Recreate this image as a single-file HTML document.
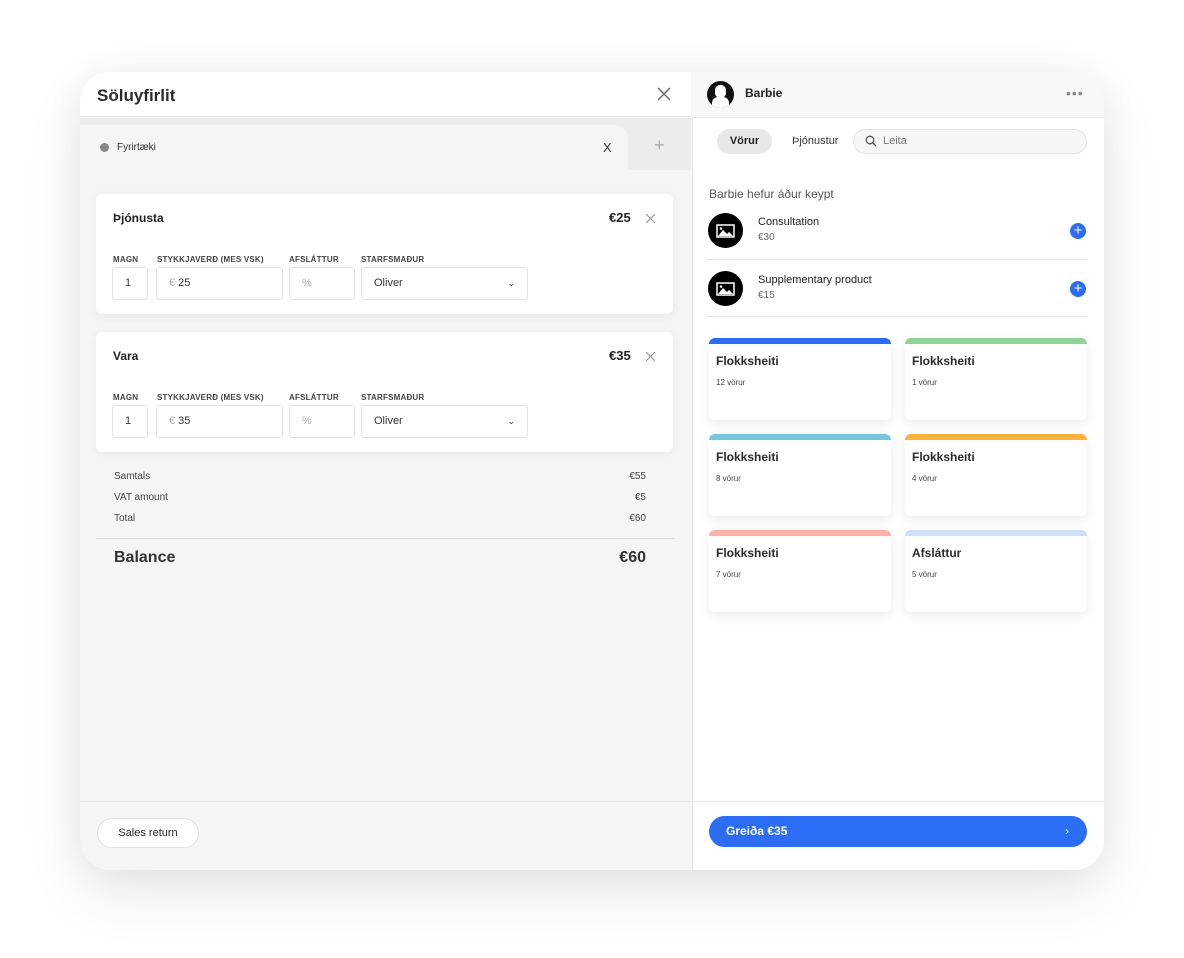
<!DOCTYPE html>
<html><head><meta charset="utf-8"><style>
*{box-sizing:border-box;margin:0;padding:0}
body{width:1184px;height:958px;background:#fff;font-family:"Liberation Sans",sans-serif;color:#222;position:relative;overflow:hidden}
.abs{position:absolute}
.app{position:absolute;left:80px;top:72px;width:1024px;height:798px;border-radius:30px;overflow:hidden;box-shadow:0 24px 60px rgba(0,0,0,.09),0 0 40px rgba(0,0,0,.05);background:#f5f5f5}
.card{position:absolute;left:16px;width:577px;height:120px;background:#fff;border-radius:6px;box-shadow:0 2px 10px rgba(0,0,0,.05)}
.lbl{position:absolute;font-size:8px;color:#444;font-weight:bold;letter-spacing:.2px}
.inp{position:absolute;top:73px;height:33px;border:1px solid #e3e3e3;border-radius:3px;font-size:11px;color:#333;padding-left:12px;line-height:31px}
.cat{position:absolute;width:182px;height:82px;background:#fff;border-radius:6px;box-shadow:0 4px 12px rgba(0,0,0,.08);overflow:hidden}
.cat .bar{height:6px}
.cat b{position:absolute;left:7px;top:16px;font-size:12px;color:#2a2a2a}
.cat span{position:absolute;left:7px;top:40px;font-size:8px;color:#444}
</style></head><body>
<div class="app">
 <div class="abs" style="left:0;top:0;width:611px;height:45px;background:#fff;border-bottom:1px solid #e8e8e8"></div>
 <div class="abs" style="left:17px;top:14px;font-size:17px;font-weight:bold;color:#2a2a2a">Söluyfirlit</div>
 <svg class="abs" style="left:577px;top:15px" width="14" height="14"><path d="M1 1L13 13M13 1L1 13" stroke="#666" stroke-width="1.4"/></svg>
 <div class="abs" style="left:0;top:46px;width:611px;height:52px;background:#ececec"></div>
 <div class="abs" style="left:0;top:53px;width:548px;height:60px;background:#f5f5f5;border-radius:0 14px 0 0"></div>
 <div class="abs" style="left:20px;top:71px;width:9px;height:9px;border-radius:50%;background:#888"></div>
 <div class="abs" style="left:37px;top:70px;font-size:10px;color:#333">Fyrirtæki</div>
 <div class="abs" style="left:523px;top:68px;font-size:13px;color:#333">X</div>
 <div class="abs" style="left:574px;top:63px;font-size:18px;color:#aaa">+</div>
 <div class="card" style="top:122px">
  <div class="abs" style="left:17px;top:17px;font-size:12px;font-weight:bold">Þjónusta</div>
  <div class="abs" style="left:513px;top:16px;font-size:13px;font-weight:bold">€25</div>
  <svg class="abs" style="left:550px;top:20px" width="9" height="9"><path d="M0 0L9 9M9 0L0 9" stroke="#999" stroke-width="1.2"/></svg>
  <div class="lbl" style="left:17px;top:61px">MAGN</div>
  <div class="lbl" style="left:61px;top:61px">STYKKJAVERÐ (MES VSK)</div>
  <div class="lbl" style="left:193px;top:61px">AFSLÁTTUR</div>
  <div class="lbl" style="left:265px;top:61px">STARFSMAÐUR</div>
  <div class="inp" style="left:16px;width:36px">1</div>
  <div class="inp" style="left:60px;width:127px"><span style="color:#aaa">€</span> 25</div>
  <div class="inp" style="left:193px;width:66px;color:#aaa">%</div>
  <div class="inp" style="left:265px;width:167px">Oliver<span style="position:absolute;right:12px;font-size:9px">⌄</span></div>
 </div>
 <div class="card" style="top:260px">
  <div class="abs" style="left:17px;top:17px;font-size:12px;font-weight:bold">Vara</div>
  <div class="abs" style="left:513px;top:16px;font-size:13px;font-weight:bold">€35</div>
  <svg class="abs" style="left:550px;top:20px" width="9" height="9"><path d="M0 0L9 9M9 0L0 9" stroke="#999" stroke-width="1.2"/></svg>
  <div class="lbl" style="left:17px;top:61px">MAGN</div>
  <div class="lbl" style="left:61px;top:61px">STYKKJAVERÐ (MES VSK)</div>
  <div class="lbl" style="left:193px;top:61px">AFSLÁTTUR</div>
  <div class="lbl" style="left:265px;top:61px">STARFSMAÐUR</div>
  <div class="inp" style="left:16px;width:36px">1</div>
  <div class="inp" style="left:60px;width:127px"><span style="color:#aaa">€</span> 35</div>
  <div class="inp" style="left:193px;width:66px;color:#aaa">%</div>
  <div class="inp" style="left:265px;width:167px">Oliver<span style="position:absolute;right:12px;font-size:9px">⌄</span></div>
 </div>
 <div class="abs" style="left:34px;top:394px;font-size:10px;color:#444;line-height:21px">Samtals<br>VAT amount<br>Total</div>
 <div class="abs" style="left:500px;width:66px;text-align:right;top:394px;font-size:10px;color:#444;line-height:21px">€55<br>€5<br>€60</div>
 <div class="abs" style="left:16px;top:466px;width:579px;height:1px;background:#ddd"></div>
 <div class="abs" style="left:34px;top:477px;font-size:16px;font-weight:bold;color:#333">Balance</div>
 <div class="abs" style="left:500px;width:66px;text-align:right;top:477px;font-size:16px;font-weight:bold;color:#333">€60</div>
 <div class="abs" style="left:0;top:729px;width:1024px;height:1px;background:#e6e6e6"></div>
 <div class="abs" style="left:17px;top:746px;width:102px;height:30px;border:1px solid #e2e2e2;border-radius:15px;background:#fff;font-size:11px;text-align:center;line-height:28px;color:#222">Sales return</div>
 <div class="abs" style="left:612px;top:0;width:412px;height:798px;background:#fff;border-left:1px solid #e6e6e6"></div>
 <div class="abs" style="left:612px;top:0;width:412px;height:46px;background:#f8f8f8;border-bottom:1px solid #e8e8e8"></div>
 <div class="abs" style="left:627px;top:9px;width:27px;height:27px;border-radius:50%;background:#111;overflow:hidden">
  <div class="abs" style="left:8px;top:4px;width:11px;height:13px;border-radius:5px;background:#fff"></div>
  <div class="abs" style="left:5px;top:16px;width:17px;height:14px;border-radius:6px 6px 0 0;background:#fff"></div>
 </div>
 <div class="abs" style="left:665px;top:14px;font-size:12px;font-weight:bold;color:#222">Barbie</div>
 <div class="abs" style="left:986px;top:13px;font-size:14px;color:#888;letter-spacing:1px">•••</div>
 <div class="abs" style="left:637px;top:57px;width:55px;height:25px;border-radius:13px;background:#e8e8e8;font-size:11px;font-weight:bold;text-align:center;line-height:25px">Vörur</div>
 <div class="abs" style="left:712px;top:63px;font-size:11px;color:#333">Þjónustur</div>
 <div class="abs" style="left:773px;top:57px;width:234px;height:25px;border-radius:13px;background:#f6f6f6;border:1px solid #e4e4e4"></div>
 <svg class="abs" style="left:785px;top:63px" width="12" height="12"><circle cx="5" cy="5" r="3.8" fill="none" stroke="#555" stroke-width="1.3"/><path d="M8 8L11 11" stroke="#555" stroke-width="1.3"/></svg>
 <div class="abs" style="left:803px;top:63px;font-size:11px;color:#777">Leita</div>
 <div class="abs" style="left:629px;top:115px;font-size:12px;color:#555">Barbie hefur áður keypt</div>
 <div class="abs" style="left:628px;top:141px;width:35px;height:35px;border-radius:50%;background:#000"></div>
 <svg class="abs" style="left:636px;top:152px" width="19" height="14"><rect x="1" y="1" width="17" height="12" fill="none" stroke="#fff" stroke-width="1.5"/><path d="M2 12L7 6L11 10L13 8L17 12Z" fill="#fff"/><circle cx="5" cy="4.5" r="1.3" fill="#fff"/></svg>
 <div class="abs" style="left:678px;top:144px;font-size:11px;color:#222">Consultation</div>
 <div class="abs" style="left:678px;top:160px;font-size:10px;color:#666">€30</div>
 <div class="abs" style="left:990px;top:151px;width:16px;height:16px;border-radius:50%;background:#2b6df5;color:#fff;font-size:15px;text-align:center;line-height:16px">+</div>
 <div class="abs" style="left:628px;top:187px;width:379px;height:1px;background:#e8e8e8"></div>
 <div class="abs" style="left:628px;top:199px;width:35px;height:35px;border-radius:50%;background:#000"></div>
 <svg class="abs" style="left:636px;top:210px" width="19" height="14"><rect x="1" y="1" width="17" height="12" fill="none" stroke="#fff" stroke-width="1.5"/><path d="M2 12L7 6L11 10L13 8L17 12Z" fill="#fff"/><circle cx="5" cy="4.5" r="1.3" fill="#fff"/></svg>
 <div class="abs" style="left:678px;top:202px;font-size:11px;color:#222">Supplementary product</div>
 <div class="abs" style="left:678px;top:218px;font-size:10px;color:#666">€15</div>
 <div class="abs" style="left:990px;top:209px;width:16px;height:16px;border-radius:50%;background:#2b6df5;color:#fff;font-size:15px;text-align:center;line-height:16px">+</div>
 <div class="abs" style="left:628px;top:244px;width:379px;height:1px;background:#e8e8e8"></div>
 <div class="cat" style="left:629px;top:266px"><div class="bar" style="background:#2b6df5"></div><b>Flokksheiti</b><span>12 vörur</span></div>
 <div class="cat" style="left:825px;top:266px"><div class="bar" style="background:#8fd696"></div><b>Flokksheiti</b><span>1 vörur</span></div>
 <div class="cat" style="left:629px;top:362px"><div class="bar" style="background:#76c6dd"></div><b>Flokksheiti</b><span>8 vörur</span></div>
 <div class="cat" style="left:825px;top:362px"><div class="bar" style="background:#ffb13d"></div><b>Flokksheiti</b><span>4 vörur</span></div>
 <div class="cat" style="left:629px;top:458px"><div class="bar" style="background:#ffb0a6"></div><b>Flokksheiti</b><span>7 vörur</span></div>
 <div class="cat" style="left:825px;top:458px"><div class="bar" style="background:#cce0f8"></div><b>Afsláttur</b><span>5 vörur</span></div>
 <div class="abs" style="left:612px;top:729px;width:412px;height:1px;background:#e6e6e6"></div>
 <div class="abs" style="left:629px;top:744px;width:378px;height:31px;border-radius:16px;background:#2b6df5;color:#fff;font-size:12px;font-weight:bold;line-height:31px;padding-left:17px">Greiða €35<span style="position:absolute;right:18px;font-weight:normal">›</span></div>
</div>
</body></html>
